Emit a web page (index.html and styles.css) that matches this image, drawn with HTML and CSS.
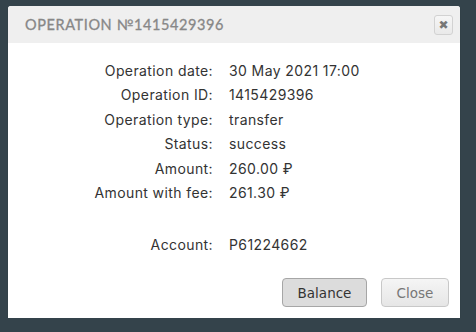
FILE: index.html
```html
<!doctype html>
<html>
<head>
<meta charset="utf-8">
<title>Operation</title>
<link rel="stylesheet" href="styles.css">
</head>
<body>
<div class="dialog">
	<div class="head">
		<span class="title">OPERATION №1415429396</span>
		<span class="close-x">&#10006;</span>
	</div>
	<div class="info">
		<span class="lbl">Operation date:</span><span class="val">30 May 2021 17:00</span>
		<span class="lbl">Operation ID:</span><span class="val">1415429396</span>
		<span class="lbl">Operation type:</span><span class="val">transfer</span>
		<span class="lbl">Status:</span><span class="val">success</span>
		<span class="lbl">Amount:</span><span class="val">260.00 ₽</span>
		<span class="lbl">Amount with fee:</span><span class="val">261.30 ₽</span>
		<span class="lbl"></span><span class="val"></span>
		<span class="lbl">Account:</span><span class="val">P61224662</span>
	</div>
	<div class="foot">
		<button class="btn btn-main">Balance</button>
		<button class="btn">Close</button>
	</div>
</div>
</body>
</html>
```
FILE: styles.css
```css
* {margin:0; padding:0; box-sizing:border-box;}

body {background:#34434b; font-family:Inter, "Noto Sans", sans-serif; overflow:hidden;}

.dialog {width:452px; height:312px; margin:6px 0 0 8px; background:#fff; border-radius:3px 3px 0 0; display:flex; flex-direction:column; box-shadow:0 1px 1px rgba(0,0,0,0.3);}

.head {height:37px; background:#efefef; border-radius:3px 3px 0 0; display:flex; align-items:center; justify-content:space-between; padding:0 7px 0 17px;}
.title {font-family:Lato, sans-serif; font-size:14.5px; letter-spacing:0.6px; color:#878787; -webkit-text-stroke:0.3px #878787;}
.close-x {width:19px; height:20px; border:1px solid #d2d2d2; border-radius:3px; background:linear-gradient(#f6f6f6, #e9e9e9); color:#767676; font-size:12px; font-weight:bold; display:flex; align-items:center; justify-content:center; font-family:"DejaVu Sans", sans-serif;}

.info {flex:1; display:grid; grid-template-columns:205px 1fr; column-gap:16px; grid-template-rows:repeat(6, 24.5px) 27.5px 24.5px; align-items:center; padding-top:15px; font-size:14px; letter-spacing:0.4px; color:#333;}
.lbl {text-align:right;}

.foot {display:flex; justify-content:flex-end; gap:14px; padding:0 11px 11px 0;}
.btn {height:29px; padding:0 14px; border:1px solid #c8c8c8; border-radius:4px; background:linear-gradient(#f5f5f5, #e6e6e6); color:#777; font-family:"DejaVu Sans", sans-serif; font-size:13.5px; width:68px;}
.btn-main {width:85px; background:#dcdcdc; border-color:#a6a6a6; color:#333;}
```
